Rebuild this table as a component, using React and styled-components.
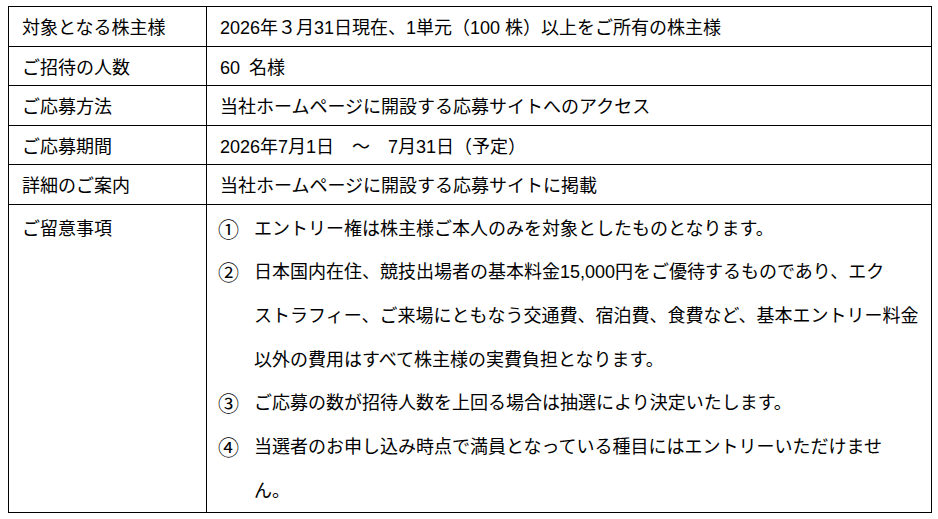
import styled, { createGlobalStyle } from "styled-components";

const GlobalStyle = createGlobalStyle`
  body {
    margin: 0;
    background: #fff;
    color: #000;
    font-family: "Liberation Sans", "Noto Sans CJK JP", sans-serif;
  }
`;

const Page = styled.div`
  padding: 6px 7px 8px 8px;
`;

const Table = styled.div`
  display: grid;
  grid-template-columns: 198px 1fr;
  width: 923px;
  border-top: 1px solid #000;
  border-left: 1px solid #000;
  font-size: 18px;
`;

const Cell = styled.div`
  box-sizing: border-box;
  height: ${(p) => (p.$tall ? "308px" : "39.5px")};
  display: flex;
  align-items: ${(p) => (p.$tall ? "flex-start" : "center")};
  padding: ${(p) => (p.$tall ? "9px 12px 0 13px" : "0 12px 0 13px")};
  border-right: 1px solid #000;
  border-bottom: 1px solid #000;
  white-space: nowrap;
`;

const NotesCell = styled(Cell)`
  padding: 0;
`;

const List = styled.ol`
  list-style: none;
  margin: 0;
  padding: 3px 0 0 11px;
  line-height: 43.7px;
  white-space: nowrap;
`;

const Item = styled.li`
  display: grid;
  grid-template-columns: 36px 1fr;
`;

const Marker = styled.span`
  font-size: 21px;
`;

const rows = [
  ["対象となる株主様", "2026年３月31日現在、1単元（100 株）以上をご所有の株主様"],
  ["ご招待の人数", "60\u2002名様"],
  ["ご応募方法", "当社ホームページに開設する応募サイトへのアクセス"],
  ["ご応募期間", "2026年7月1日　～　7月31日（予定）"],
  ["詳細のご案内", "当社ホームページに開設する応募サイトに掲載"],
];

const notes = [
  ["①", ["エントリー権は株主様ご本人のみを対象としたものとなります。"]],
  [
    "②",
    [
      "日本国内在住、競技出場者の基本料金15,000円をご優待するものであり、エク",
      "ストラフィー、ご来場にともなう交通費、宿泊費、食費など、基本エントリー料金",
      "以外の費用はすべて株主様の実費負担となります。",
    ],
  ],
  ["③", ["ご応募の数が招待人数を上回る場合は抽選により決定いたします。"]],
  ["④", ["当選者のお申し込み時点で満員となっている種目にはエントリーいただけませ", "ん。"]],
];

export default function App() {
  return (
    <>
      <GlobalStyle />
      <Page>
        <Table>
          {rows.map(([label, value]) => (
            <>
              <Cell key={label}>{label}</Cell>
              <Cell key={label + "-v"}>{value}</Cell>
            </>
          ))}
          <Cell $tall>ご留意事項</Cell>
          <NotesCell $tall>
            <List>
              {notes.map(([mark, lines]) => (
                <Item key={mark}>
                  <Marker>{mark}</Marker>
                  <span>
                    {lines.map((l, i) => (
                      <div key={i}>{l}</div>
                    ))}
                  </span>
                </Item>
              ))}
            </List>
          </NotesCell>
        </Table>
      </Page>
    </>
  );
}
